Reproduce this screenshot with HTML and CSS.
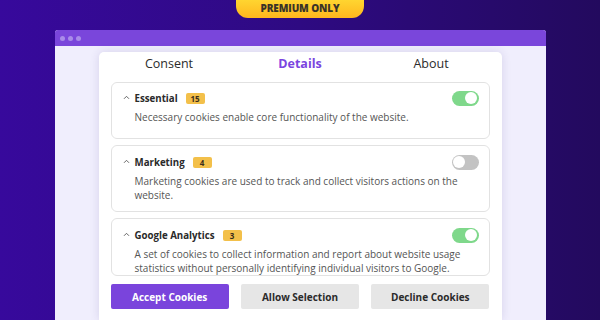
FILE: index.html
```html
<!DOCTYPE html>
<html>
<head>
<meta charset="utf-8">
<link rel="stylesheet" href="styles.css">
</head>
<body>
<div class="stage">
  <div class="badge">PREMIUM ONLY</div>
  <div class="window">
    <div class="titlebar"><span class="dot"></span><span class="dot"></span><span class="dot"></span></div>
    <div class="viewport">
      <div class="card">
        <div class="tabs">
          <div class="tab">Consent</div>
          <div class="tab active">Details</div>
          <div class="tab">About</div>
        </div>
        <div class="section s1">
          <div class="head">
            <svg class="chev" width="7" height="5" viewBox="0 0 7 5"><path d="M1 3.8 L3.5 1.3 L6 3.8" fill="none" stroke="#555" stroke-width="0.9"/></svg>
            <span class="title">Essential</span><span class="count">15</span>
            <span class="toggle on"></span>
          </div>
          <p class="desc">Necessary cookies enable core functionality of the website.</p>
        </div>
        <div class="section s2">
          <div class="head">
            <svg class="chev" width="7" height="5" viewBox="0 0 7 5"><path d="M1 3.8 L3.5 1.3 L6 3.8" fill="none" stroke="#555" stroke-width="0.9"/></svg>
            <span class="title">Marketing</span><span class="count">4</span>
            <span class="toggle"></span>
          </div>
          <p class="desc">Marketing cookies are used to track and collect visitors actions on the website.</p>
        </div>
        <div class="section s3">
          <div class="head">
            <svg class="chev" width="7" height="5" viewBox="0 0 7 5"><path d="M1 3.8 L3.5 1.3 L6 3.8" fill="none" stroke="#555" stroke-width="0.9"/></svg>
            <span class="title">Google Analytics</span><span class="count">3</span>
            <span class="toggle on"></span>
          </div>
          <p class="desc">A set of cookies to collect information and report about website usage statistics without personally identifying individual visitors to Google.</p>
        </div>
        <div class="buttons">
          <div class="btn primary">Accept Cookies</div>
          <div class="btn">Allow Selection</div>
          <div class="btn">Decline Cookies</div>
        </div>
      </div>
    </div>
  </div>
</div>
</body>
</html>
```
FILE: styles.css
```css
* { box-sizing: border-box; }
html, body { margin: 0; padding: 0; }
body {
  width: 600px;
  height: 320px;
  overflow: hidden;
  font-family: "Open Sans", "Noto Sans", sans-serif;
  background: linear-gradient(90deg, #37099c 0%, #2e0a82 50%, #230a5e 100%);
}
.stage {
  display: flex;
  flex-direction: column;
  align-items: center;
  height: 320px;
}
.badge {
  width: 128px;
  height: 18px;
  border-radius: 0 0 12px 12px;
  background: linear-gradient(180deg, #ffd530 0%, #ffb61e 100%);
  color: #3a3328;
  font-weight: 800;
  font-size: 10px;
  letter-spacing: -0.1px;
  display: flex;
  align-items: center;
  justify-content: center;
  padding-bottom: 3px;
}
.window {
  margin-top: 12px;
  width: 491px;
  flex: 1;
  display: flex;
  flex-direction: column;
  background: #f0eefd;
  border-radius: 3px 3px 0 0;
  overflow: hidden;
}
.titlebar {
  height: 16px;
  background: #7a46db;
  display: flex;
  align-items: center;
  gap: 3px;
  padding-left: 5px;
}
.dot {
  width: 5px;
  height: 5px;
  border-radius: 50%;
  background: #a98be9;
}
.viewport {
  flex: 1;
  padding: 6px 44px 0;
  display: flex;
}
.card {
  flex: 1;
  background: #fff;
  border-radius: 5px 5px 0 0;
  box-shadow: 0 0 10px rgba(60, 40, 120, 0.14);
  padding: 0 12px;
  display: flex;
  flex-direction: column;
}
.tabs {
  display: flex;
  height: 30px;
  align-items: center;
  padding-bottom: 8px;
  margin: 0 -7px;
}
.tab {
  flex: 1;
  text-align: center;
  font-size: 12.5px;
  color: #2b2b2b;
}
.tab.active {
  color: #7b45df;
  font-weight: 700;
}
.section {
  border: 1px solid #e2e2e2;
  border-radius: 6px;
  padding: 8px 10px 0 11px;
  margin-bottom: 6px;
  overflow: hidden;
  flex: none;
}
.s1 { height: 57px; padding-top: 7px; }
.s2 { height: 67px; }
.s3 { height: 58px; margin-bottom: 8px; }
.head {
  display: flex;
  align-items: center;
  height: 16px;
}
.chev {
  margin-right: 5px;
  margin-top: -1px;
}
.title {
  font-weight: 700;
  font-size: 9.7px;
  color: #2a2a2a;
}
.count {
  margin-left: 8px;
  min-width: 19px;
  text-align: center;
  background: #f3c04a;
  color: #3a2e1a;
  font-size: 8px;
  font-weight: 700;
  height: 11px;
  line-height: 11px;
  padding: 0 4px;
  border-radius: 2px;
}
.toggle {
  margin-left: auto;
  width: 27px;
  height: 15px;
  border-radius: 8px;
  background: #c3c3c3;
  position: relative;
}
.toggle::after {
  content: "";
  position: absolute;
  top: 1.5px;
  left: 1.5px;
  width: 12px;
  height: 12px;
  border-radius: 50%;
  background: #fff;
}
.toggle.on { background: #7fd88b; }
.toggle.on::after { left: auto; right: 1.5px; }
.desc {
  margin: 4px 0 0 12px;
  font-size: 10px;
  line-height: 14px;
  color: #555;
}
.buttons {
  display: flex;
  gap: 12px;
}
.btn {
  flex: 1;
  height: 25px;
  background: #e6e6e6;
  color: #2b2b2b;
  font-size: 10px;
  font-weight: 700;
  display: flex;
  align-items: center;
  justify-content: center;
  border-radius: 2px;
}
.btn.primary {
  background: #7a44dc;
  color: #fff;
}
```
